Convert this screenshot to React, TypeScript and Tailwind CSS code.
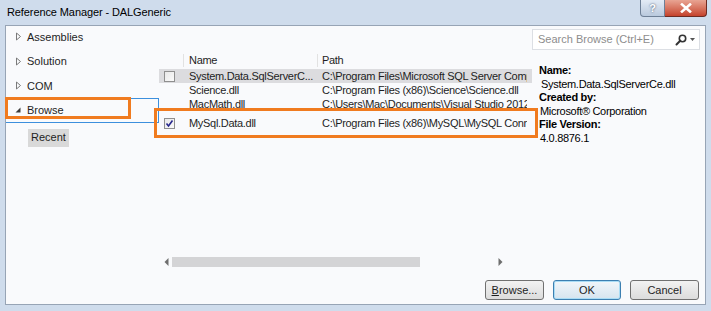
import React from 'react';

const font = { fontFamily: '"Liberation Sans", Arial, sans-serif' };

const navItems = [
  { label: 'Assemblies', open: false },
  { label: 'Solution', open: false },
  { label: 'COM', open: false },
  { label: 'Browse', open: true },
];

const rows = [
  { name: 'System.Data.SqlServerC...', path: 'C:\\Program Files\\Microsoft SQL Server Compact Edition', checked: false, selected: true, box: true },
  { name: 'Science.dll', path: 'C:\\Program Files (x86)\\Science\\Science.dll', checked: false, selected: false, box: false },
  { name: 'MacMath.dll', path: 'C:\\Users\\Mac\\Documents\\Visual Studio 2012', checked: false, selected: false, box: false },
  { name: 'MySql.Data.dll', path: 'C:\\Program Files (x86)\\MySQL\\MySQL Connector', checked: true, selected: false, box: true },
];

function Arrow({ open }: { open: boolean }) {
  if (open) {
    return (
      <svg width="8" height="8" viewBox="0 0 8 8" className="shrink-0">
        <path d="M6.5 1.5 L6.5 6.5 L1.5 6.5 Z" fill="#3c3c3c" />
      </svg>
    );
  }
  return (
    <svg width="8" height="9" viewBox="0 0 8 9" className="shrink-0">
      <path d="M2.5 1 L6.5 4.5 L2.5 8 Z" fill="none" stroke="#7a7a7a" strokeWidth="1" />
    </svg>
  );
}

function CheckBox({ checked }: { checked: boolean }) {
  return (
    <div className="w-[11px] h-[11px] border border-[#8f8f8f] bg-gradient-to-br from-[#e8e8e8] to-[#fafafa] flex items-center justify-center">
      {checked && (
        <svg width="9" height="9" viewBox="0 0 9 9">
          <path d="M1.5 4.5 L3.5 7 L7.5 1.5" fill="none" stroke="#27278c" strokeWidth="1.6" />
        </svg>
      )}
    </div>
  );
}

export default function App() {
  return (
    <div style={font} className="relative w-[711px] h-[311px] bg-[#cfdcec] overflow-hidden text-[11.5px] text-[#1e1e1e]">
      {/* Title bar */}
      <div className="h-[25px] flex items-center pl-[7px] text-black text-[11px] tracking-[-0.1px]">
        Reference Manager - DALGeneric
        <div className="ml-auto self-start flex mr-[4px] tracking-normal">
          <div className="w-[25px] h-[17px] border border-[#6d7f96] border-t-0 rounded-bl-[4px] bg-gradient-to-b from-[#e3ebf5] to-[#b9c9dd] flex items-center justify-center text-[11px] font-bold text-white [text-shadow:0_0_2px_#33415a]">
            ?
          </div>
          <div className="w-[42px] h-[17px] border border-[#6d2b22] border-t-0 border-l-0 rounded-br-[4px] bg-gradient-to-b from-[#e8a493] to-[#c4412b] flex items-center justify-center">
            <svg width="12" height="10" viewBox="0 0 12 10">
              <path d="M2 1.5 L10 8.5 M10 1.5 L2 8.5" stroke="#ffffff" strokeWidth="2.6" strokeLinecap="square" />
            </svg>
          </div>
        </div>
      </div>

      {/* Body */}
      <div className="absolute left-[5px] top-[25px] w-[701px] h-[280px] bg-[#f9fafc] border border-[#97a4b5] flex flex-col">
        <div className="flex flex-1">
          {/* Left nav */}
          <div className="w-[150px] -mt-[1.5px] flex flex-col text-[11px]">
            {navItems.map((item) => (
              <div
                key={item.label}
                className={`h-[24.5px] flex items-center gap-[5px] pl-[8px] ${item.open ? 'border border-[#3c8fdd] border-l-0 -mr-[3px]' : ''}`}
              >
                <Arrow open={item.open} />
                <span>{item.label}</span>
              </div>
            ))}
            <div className="mt-[6px] ml-[22px] self-start px-[3px] h-[18px] flex items-center bg-[#d9d9d9]">
              Recent
            </div>
          </div>

          {/* Middle list */}
          <div className="w-[373px] ml-[3px] flex flex-col text-[11px] tracking-[-0.3px]">
            <div className="h-[28px]" />
            <div className="h-[13px] flex items-end leading-[13px]">
              <div className="w-[25px] h-full border-r border-[#e2e2e2]" />
              <div className="w-[134px] pl-[5px] h-full border-r border-[#e2e2e2]">Name</div>
              <div className="pl-[4px]">Path</div>
            </div>
            <div className="mt-[2px] flex flex-col">
              {rows.map((r, i) => (
                <div
                  key={r.name}
                  className={`flex items-center whitespace-nowrap overflow-hidden ${i === 3 ? 'h-[20px] mt-[2px]' : 'h-[14px]'} ${r.selected ? 'bg-[#dcdcdf]' : ''}`}
                >
                  <div className="w-[25px] pl-[5px] shrink-0">{r.box && <CheckBox checked={r.checked} />}</div>
                  <div className="w-[134px] pl-[5px] shrink-0 overflow-hidden">{r.name}</div>
                  <div className="pl-[4px] overflow-hidden w-[209px]">{r.path}</div>
                </div>
              ))}
            </div>
            <div className="flex-1" />
            {/* Horizontal scrollbar */}
            <div className="h-[12px] w-[344px] flex items-center gap-[3px] mb-[12px] pl-[5px]">
              <svg width="5" height="8" viewBox="0 0 5 8">
                <path d="M4.5 0 L0.5 4 L4.5 8 Z" fill="#6e6e6e" />
              </svg>
              <div className="h-[10px] w-[248px] bg-[#d4d4d6]" />
              <div className="flex-1" />
              <svg width="5" height="8" viewBox="0 0 5 8">
                <path d="M0.5 0 L4.5 4 L0.5 8 Z" fill="#6e6e6e" />
              </svg>
            </div>
          </div>

          {/* Right panel */}
          <div className="flex-1 pt-[3px] pr-[5px] flex flex-col text-[11px]">
            <div className="h-[21px] border border-[#dcdfe4] bg-white flex items-center pl-[5px] pr-[4px] text-[#8d8d8d]">
              Search Browse (Ctrl+E)
              <div className="ml-auto flex items-center gap-[3px]">
                <svg width="12" height="12" viewBox="0 0 12 12">
                  <circle cx="7.5" cy="4.5" r="3.2" fill="none" stroke="#333" strokeWidth="1.6" />
                  <path d="M5.2 6.8 L1.5 10.5" stroke="#333" strokeWidth="2" strokeLinecap="round" />
                </svg>
                <svg width="5" height="3" viewBox="0 0 5 3">
                  <path d="M0 0 L5 0 L2.5 3 Z" fill="#555" />
                </svg>
              </div>
            </div>
            <div className="mt-[14px] pl-[7px] flex flex-col leading-[13.6px] text-black tracking-[-0.3px]">
              <span className="font-bold">Name:</span>
              <span className="pl-[2px]">System.Data.SqlServerCe.dll</span>
              <span className="font-bold">Created by:</span>
              <span className="pl-[1px]">Microsoft® Corporation</span>
              <span className="font-bold">File Version:</span>
              <span className="pl-[1px]">4.0.8876.1</span>
            </div>
          </div>
        </div>

        {/* Buttons */}
        <div className="h-[24px] flex items-start justify-end gap-[9px] pr-[6px] text-[11px]">
          <button className="w-[59px] h-[20px] rounded-[3px] border border-[#707070] bg-gradient-to-b from-[#f2f2f2] to-[#dcdcdc] leading-none">
            <span className="underline">B</span>rowse...
          </button>
          <button className="w-[68px] h-[20px] rounded-[3px] border border-[#3c7fb1] bg-gradient-to-b from-[#f1f6fa] to-[#d6e4ef] leading-none shadow-[inset_0_0_0_1px_#a9dcf5]">
            OK
          </button>
          <button className="w-[69px] h-[20px] rounded-[3px] border border-[#707070] bg-gradient-to-b from-[#f2f2f2] to-[#dcdcdc] leading-none">
            Cancel
          </button>
        </div>
      </div>

      {/* Orange annotation boxes */}
      <div className="absolute left-[5px] top-[97px] w-[126px] h-[22px] border-[3px] border-[#f07b1f]" />
      <div className="absolute left-[154px] top-[108px] w-[384px] h-[30px] border-[3px] border-[#f07b1f]" />
    </div>
  );
}
